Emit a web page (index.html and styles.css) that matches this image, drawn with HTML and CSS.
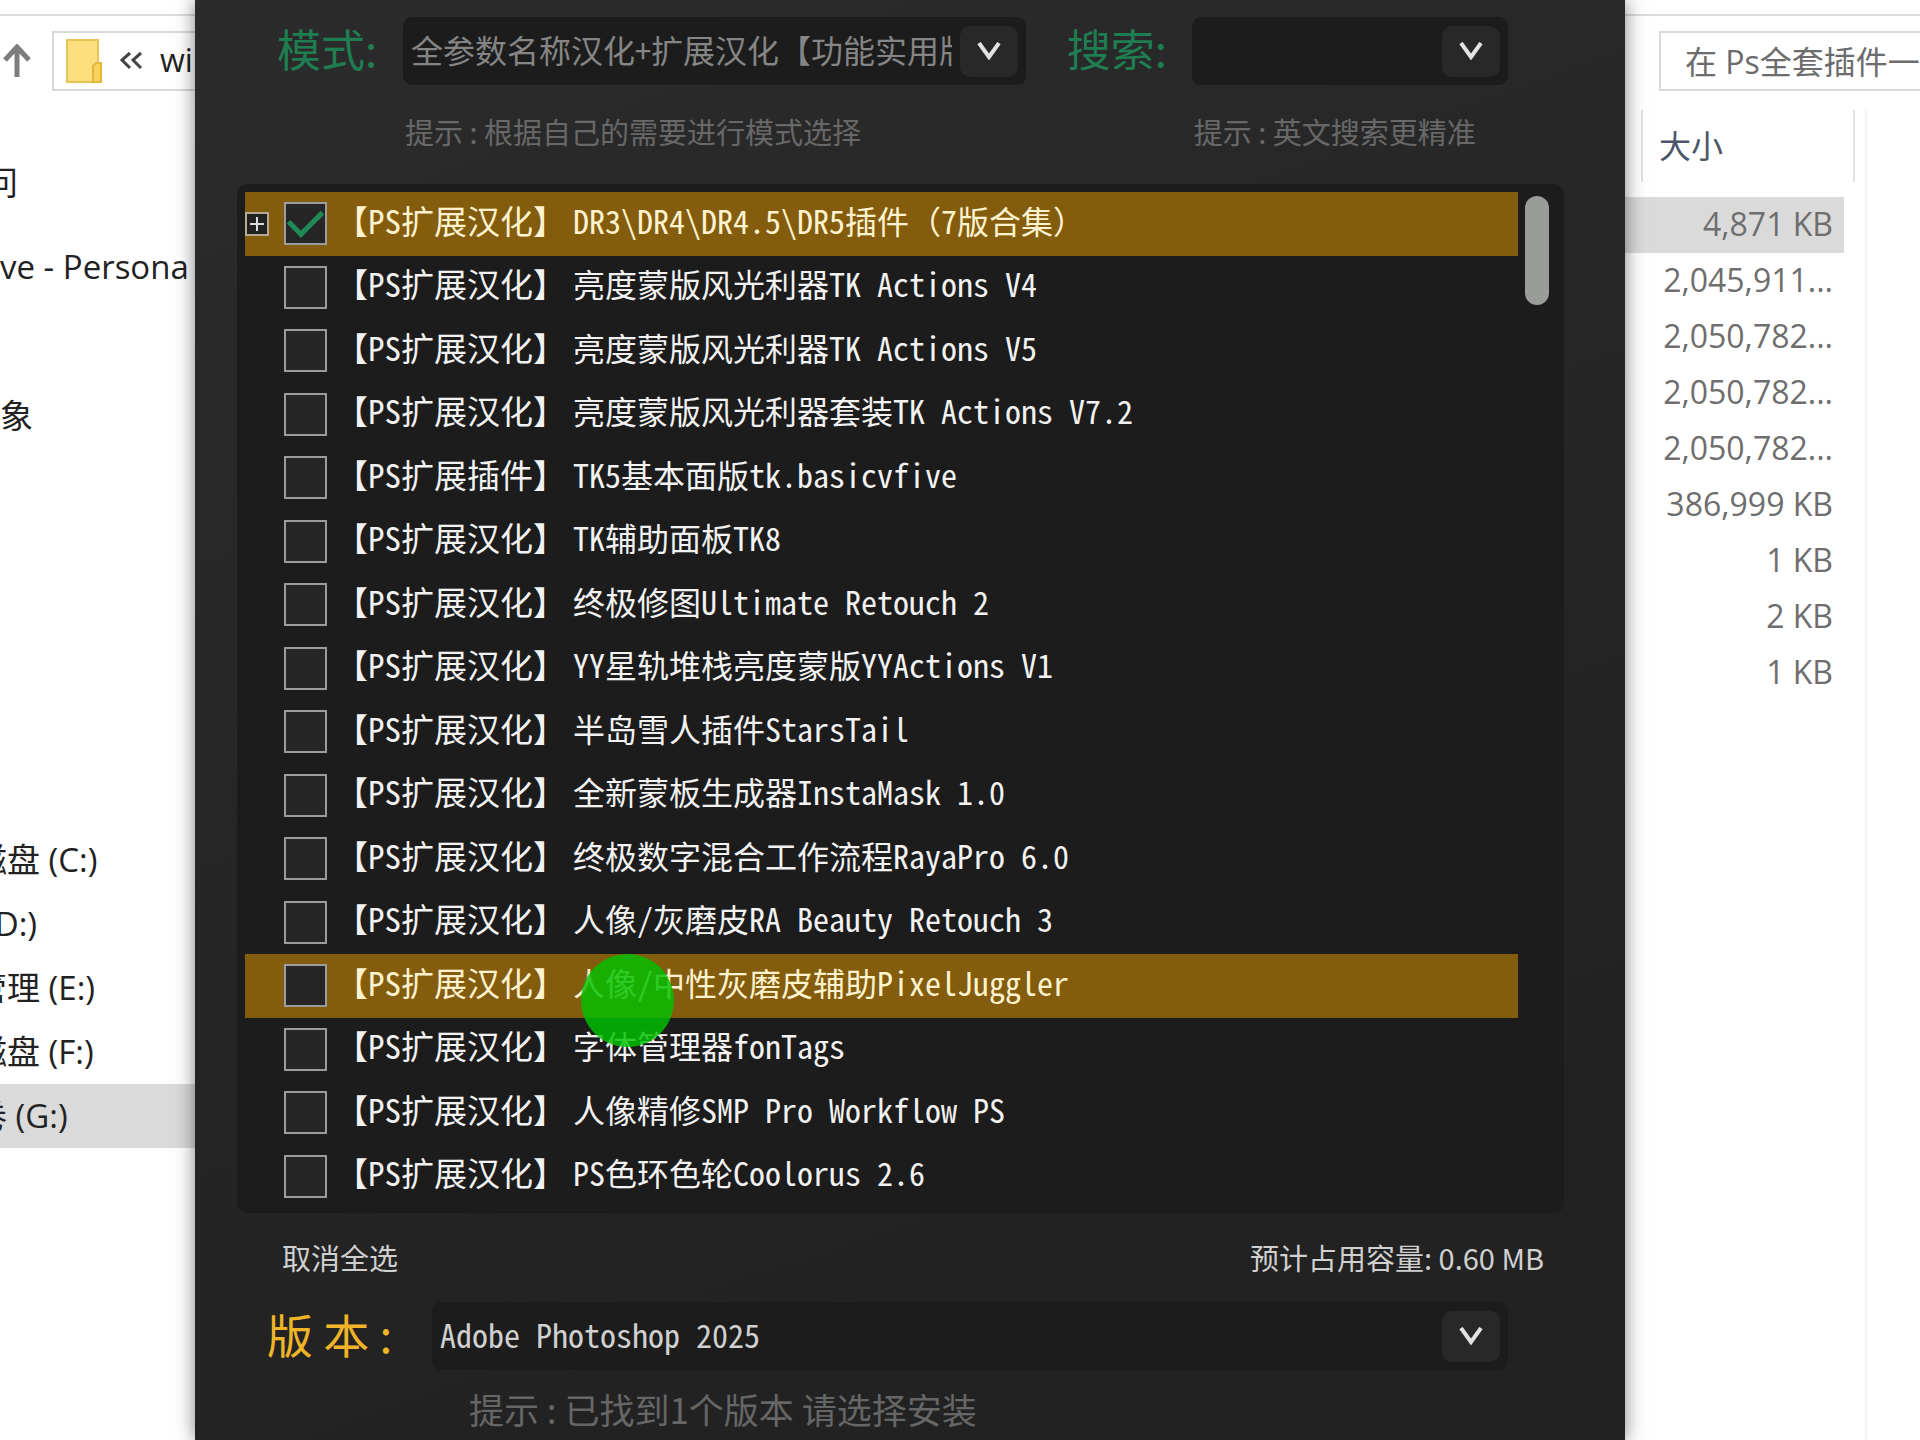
FILE: index.html
```
<!DOCTYPE html>
<html lang="zh-CN">
<head>
    <meta charset="UTF-8">
    <meta name="viewport" content="width=device-width, initial-scale=1.0">
    <title>Ps全套插件</title>
    <link rel="stylesheet" href="styles.css">
</head>
<body>

    <!-- Explorer: navigation side -->
    <div class="side">
        <div class="toolbar">
            <button type="button" class="up" aria-label="Up">
                <svg width="30" height="34" viewBox="0 0 30 34"><path d="M15 33V3M3 16L15 3l12 13" fill="none" stroke="#7d7d7d" stroke-width="5"/></svg>
            </button>
            <div class="address">
                <svg width="36" height="44" viewBox="0 0 36 44">
                    <path d="M1 1h31v42H1z" fill="#fbdf7c" stroke="#e8c458" stroke-width="2"/>
                    <path d="M27 43V27l3-3h5v19z" fill="#f8d35a" stroke="#e3b840" stroke-width="2"/>
                </svg>
                <svg width="24" height="20" viewBox="0 0 24 20"><path d="M11 2L3 9l8 8M22 2l-8 7 8 8" fill="none" stroke="#444" stroke-width="3"/></svg>
                <span>wi</span>
            </div>
        </div>
        <ul class="nav">
            <li class="cut">问</li>
            <li>ve - Persona</li>
            <li>象</li>
        </ul>
        <ul class="nav drives">
            <li class="cut-more">磁盘 (C:)</li>
            <li class="cut">(D:)</li>
            <li class="cut-more">管理 (E:)</li>
            <li class="cut-more">磁盘 (F:)</li>
            <li class="cut-more active">卷 (G:)</li>
        </ul>
    </div>

    <!-- Installer dialog -->
    <form class="dialog">
        <div class="filters">
            <label class="title" for="mode">模式:</label>
            <div class="combo">
                <select id="mode" class="muted">
                    <option>全参数名称汉化+扩展汉化【功能实用版】</option>
                </select>
                <span class="arrow"><svg width="24" height="18" viewBox="0 0 24 18"><path d="M2 1l10 14L22 1" fill="none" stroke="#e2e2e2" stroke-width="4"/></svg></span>
            </div>
            <label class="title second" for="search">搜索:</label>
            <div class="combo">
                <input type="text" id="search">
                <button type="button" class="arrow" aria-label="展开"><svg width="24" height="18" viewBox="0 0 24 18"><path d="M2 1l10 14L22 1" fill="none" stroke="#e2e2e2" stroke-width="4"/></svg></button>
            </div>
            <p class="hint left">提示 : 根据自己的需要进行模式选择</p>
            <p class="hint right">提示 : 英文搜索更精准</p>
        </div>

        <div class="list">
            <div class="rows">
                <div class="row selected">
                    <button type="button" class="expand" aria-label="展开"><svg width="20" height="20" viewBox="0 0 20 20"><path d="M10 3v14M3 10h14" stroke="#ddd" stroke-width="2"/></svg></button>
                    <label><input type="checkbox" checked><span class="text"><span class="tag">【PS扩展汉化】</span>DR3\DR4\DR4.5\DR5插件<span class="wide">（</span>7版合集<span class="wide">）</span></span></label>
                </div>
                <div class="row"><label><input type="checkbox"><span class="text"><span class="tag">【PS扩展汉化】</span>亮度蒙版风光利器TK Actions V4</span></label></div>
                <div class="row"><label><input type="checkbox"><span class="text"><span class="tag">【PS扩展汉化】</span>亮度蒙版风光利器TK Actions V5</span></label></div>
                <div class="row"><label><input type="checkbox"><span class="text"><span class="tag">【PS扩展汉化】</span>亮度蒙版风光利器套装TK Actions V7.2</span></label></div>
                <div class="row"><label><input type="checkbox"><span class="text"><span class="tag">【PS扩展插件】</span>TK5基本面版tk.basicvfive</span></label></div>
                <div class="row"><label><input type="checkbox"><span class="text"><span class="tag">【PS扩展汉化】</span>TK辅助面板TK8</span></label></div>
                <div class="row"><label><input type="checkbox"><span class="text"><span class="tag">【PS扩展汉化】</span>终极修图Ultimate Retouch 2</span></label></div>
                <div class="row"><label><input type="checkbox"><span class="text"><span class="tag">【PS扩展汉化】</span>YY星轨堆栈亮度蒙版YYActions V1</span></label></div>
                <div class="row"><label><input type="checkbox"><span class="text"><span class="tag">【PS扩展汉化】</span>半岛雪人插件StarsTail</span></label></div>
                <div class="row"><label><input type="checkbox"><span class="text"><span class="tag">【PS扩展汉化】</span>全新蒙板生成器InstaMask 1.0</span></label></div>
                <div class="row"><label><input type="checkbox"><span class="text"><span class="tag">【PS扩展汉化】</span>终极数字混合工作流程RayaPro 6.0</span></label></div>
                <div class="row"><label><input type="checkbox"><span class="text"><span class="tag">【PS扩展汉化】</span>人像/灰磨皮RA Beauty Retouch 3</span></label></div>
                <div class="row selected">
                    <label><input type="checkbox"><span class="text"><span class="tag">【PS扩展汉化】</span>人像/中性灰磨皮辅助PixelJuggler</span></label>
                    <span class="pointer"></span>
                </div>
                <div class="row"><label><input type="checkbox"><span class="text"><span class="tag">【PS扩展汉化】</span>字体管理器fonTags</span></label></div>
                <div class="row"><label><input type="checkbox"><span class="text"><span class="tag">【PS扩展汉化】</span>人像精修SMP Pro Workflow PS</span></label></div>
                <div class="row"><label><input type="checkbox"><span class="text"><span class="tag">【PS扩展汉化】</span>PS色环色轮Coolorus 2.6</span></label></div>
            </div>
            <div class="scrollbar"><div class="thumb"></div></div>
        </div>

        <div class="status">
            <button type="button" class="clear">取消全选</button>
            <span>预计占用容量: 0.60 MB</span>
        </div>

        <div class="version">
            <label for="version">版 本 :</label>
            <div class="combo">
                <select id="version">
                    <option>Adobe Photoshop 2025</option>
                </select>
                <span class="arrow"><svg width="24" height="18" viewBox="0 0 24 18"><path d="M2 1l10 14L22 1" fill="none" stroke="#e2e2e2" stroke-width="4"/></svg></span>
            </div>
        </div>
        <p class="found">提示 : 已找到1个版本 请选择安装</p>
    </form>

    <!-- Explorer: file sizes side -->
    <div class="files">
        <div class="toolbar">
            <input type="text" class="find" aria-label="搜索" placeholder="在 Ps全套插件一">
        </div>
        <div class="pane">
            <table>
                <thead>
                    <tr><th>大小</th></tr>
                </thead>
                <tbody>
                    <tr class="active"><td>4,871 KB</td></tr>
                    <tr><td>2,045,911...</td></tr>
                    <tr><td>2,050,782...</td></tr>
                    <tr><td>2,050,782...</td></tr>
                    <tr><td>2,050,782...</td></tr>
                    <tr><td>386,999 KB</td></tr>
                    <tr><td>1 KB</td></tr>
                    <tr><td>2 KB</td></tr>
                    <tr><td>1 KB</td></tr>
                </tbody>
            </table>
        </div>
    </div>

</body>
</html>
```
FILE: styles.css
```
* {
    box-sizing: border-box;
}
body {
    font-family: "Open Sans", "Noto Sans CJK SC", sans-serif;
    font-size: 32px;
    color: #222;
    background-color: #fff;
    margin: 0;
    display: grid;
    grid-template-columns: 195px minmax(0, 1fr) 295px;
    min-height: 100vh;
    overflow: hidden;
}
ul, p {
    margin: 0;
    padding: 0;
    list-style: none;
}
button, input, select {
    font: inherit;
    color: inherit;
    background: none;
    border: none;
    padding: 0;
    margin: 0;
    outline: none;
}
svg {
    display: block;
    flex: none;
}

/* explorer */
.side, .files {
    min-width: 0;
    overflow: hidden;
    padding-top: 14px;
}
.toolbar {
    display: flex;
    align-items: center;
    height: 76px;
    padding-top: 16px;
    border-top: 2px solid #dcdcdc;
}
.up {
    flex: none;
    width: 52px;
    padding-left: 2px;
}
.address {
    flex: 1;
    min-width: 0;
    display: flex;
    align-items: center;
    gap: 17px;
    height: 60px;
    padding-left: 12px;
    border: 2px solid #d9d9d9;
    border-right: none;
    white-space: nowrap;
}
.address span {
    padding-bottom: 4px;
}
.nav {
    padding-top: 61px;
    font-size: 33px;
}
.nav li {
    height: 64px;
    line-height: 64px;
    white-space: nowrap;
}
.nav li + li {
    margin-top: 20px;
}
.nav li:nth-child(3) {
    margin-top: 85px;
}
.drives {
    padding-top: 380px;
}
.drives li + li, .drives li:nth-child(3) {
    margin-top: 0;
}
.nav .cut {
    text-indent: -15px;
}
.nav .cut-more {
    text-indent: -26px;
}
.active {
    background-color: #dadada;
}

/* dialog */
.dialog {
    position: relative;
    z-index: 1;
    padding-top: 17px;
    background: linear-gradient(160deg, #2b2b2b, #222 80%);
    box-shadow: 0 0 18px rgba(0, 0, 0, 0.5);
    color: #d0d0d0;
    font-family: "Noto Sans CJK SC", sans-serif;
}
.filters {
    display: grid;
    grid-template-columns: 126px minmax(0, 63fr) 166px minmax(0, 32fr);
    row-gap: 26px;
    align-items: center;
    padding: 0 117px 0 82px;
}
.title {
    font-size: 44px;
    line-height: 62px;
    padding-bottom: 6px;
    color: #1f7d52;
}
.second {
    padding-left: 41px;
}
.combo {
    display: flex;
    align-items: center;
    height: 68px;
    padding-right: 8px;
    background-color: #1c1c1c;
    border-radius: 9px;
}
.combo select, .combo input {
    flex: 1;
    min-width: 0;
    height: 60px;
    padding: 0 8px 4px;
    appearance: none;
    font-feature-settings: "hwid", "liga" 0;
}
.combo .muted {
    color: #858585;
}
.arrow {
    width: 58px;
    height: 51px;
    display: flex;
    align-items: center;
    justify-content: center;
    background-color: #282828;
    border-radius: 10px;
}
.hint {
    font-size: 29px;
    line-height: 40px;
    color: #686868;
    white-space: nowrap;
    padding-left: 2px;
}
.left {
    grid-column: 2;
}
.right {
    grid-column: 4;
}

.list {
    display: flex;
    gap: 7px;
    margin: 33px 61px 0 42px;
    padding: 8px 8px 5px;
    background-color: #1c1c1c;
    border-radius: 10px;
}
/* 16 rows visible at a time */
.rows {
    flex: 1;
    min-width: 0;
    display: grid;
    grid-auto-rows: 1fr;
    height: 1016px;
}
.row {
    position: relative;
    display: flex;
    align-items: center;
    padding-left: 39px;
    color: #f2f2f2;
}
.row label {
    display: flex;
    align-items: center;
}
.selected {
    background-color: #835c0d;
    color: #fff3cf;
}
.row input {
    appearance: none;
    display: grid;
    place-items: center;
    width: 43px;
    height: 43px;
    background-color: #262626;
    border: 2px solid #9c9c9c;
}
.row input:checked::before {
    content: "";
    width: 28px;
    height: 15px;
    margin-bottom: 9px;
    border-left: 5px solid #1f8a55;
    border-bottom: 5px solid #1f8a55;
    transform: rotate(-45deg);
}
.text {
    padding: 0 0 8px 8px;
    line-height: 46px;
    font-feature-settings: "hwid", "liga" 0;
    white-space: pre;
}
.tag {
    font-size: 33px;
    margin-right: 7px;
}
.wide {
    font-feature-settings: "hwid" 0;
}
.expand {
    width: 24px;
    height: 24px;
    margin: 0 15px 0 -39px;
    background-color: #222;
    border: 2px solid #b5ab95;
}
.pointer {
    position: absolute;
    left: 336px;
    top: 0;
    width: 93px;
    height: 93px;
    border-radius: 50%;
    background-color: rgba(0, 194, 0, 0.82);
    z-index: 1;
}
.scrollbar {
    width: 31px;
    padding-top: 4px;
}
.thumb {
    width: 24px;
    height: 109px;
    border-radius: 12px;
    background-color: #9a9c9a;
}

.status {
    display: flex;
    justify-content: space-between;
    align-items: center;
    height: 89px;
    padding: 0 81px 2px 87px;
    font-size: 29px;
}
.version {
    display: flex;
    align-items: center;
    padding: 0 117px 0 72px;
}
.version label {
    width: 165px;
    font-size: 46px;
    line-height: 62px;
    padding-bottom: 6px;
    color: #f0b429;
}
.version .combo {
    flex: 1;
}
.found {
    padding: 13px 0 0 274px;
    font-size: 35px;
    line-height: 52px;
    color: #666;
}

/* file sizes */
.files .toolbar {
    padding-left: 34px;
}
.find {
    flex: 1;
    min-width: 0;
    height: 60px;
    padding-left: 24px;
    border: 2px solid #d9d9d9;
    border-right: none;
}
.find::placeholder {
    color: #6c6c6c;
}
.pane {
    width: 242px;
    min-height: 100%;
    margin-top: 20px;
    border-right: 2px solid #f3f3f3;
    background: linear-gradient(#e2e2e2, #e2e2e2) 228px 0 / 2px 72px no-repeat;
}
table {
    width: 219px;
    border-collapse: collapse;
}
th {
    height: 72px;
    padding: 0 0 4px 34px;
    text-align: left;
    font-weight: normal;
    color: #4c5668;
    background: linear-gradient(#e2e2e2, #e2e2e2) 16px 0 / 2px 100% no-repeat;
}
thead::after {
    content: "";
    display: block;
    height: 15px;
}
td {
    height: 56px;
    line-height: 50px;
    padding: 0 11px 2px 0;
    text-align: right;
    color: #6e6e6e;
}
```
